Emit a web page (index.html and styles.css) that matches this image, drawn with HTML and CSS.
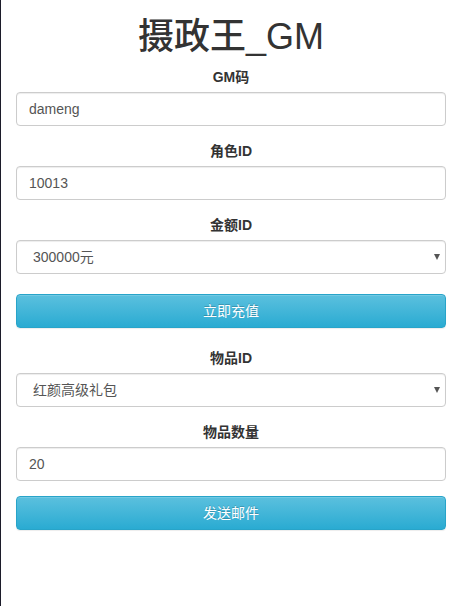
FILE: index.html
```html
<!DOCTYPE html>
<html lang="zh">
<head>
<meta charset="utf-8">
<title>摄政王_GM</title>
<link rel="stylesheet" href="styles.css">
</head>
<body>
<div class="container">
  <h1 class="title">摄政王_GM</h1>
  <div class="form-group">
    <label>GM码</label>
    <input class="form-control" type="text" value="dameng">
  </div>
  <div class="form-group">
    <label>角色ID</label>
    <input class="form-control" type="text" value="10013">
  </div>
  <div class="form-group">
    <label>金额ID</label>
    <div class="select-wrap">
      <select class="form-control select"><option>300000元</option></select>
    </div>
  </div>
  <div class="btn-row first">
    <button class="btn">立即充值</button>
  </div>
  <div class="form-group">
    <label>物品ID</label>
    <div class="select-wrap">
      <select class="form-control select"><option>红颜高级礼包</option></select>
    </div>
  </div>
  <div class="form-group">
    <label>物品数量</label>
    <input class="form-control" type="text" value="20">
  </div>
  <div class="btn-row">
    <button class="btn">发送邮件</button>
  </div>
</div>
</body>
</html>
```
FILE: styles.css
```css
html, body {
  margin: 0;
  padding: 0;
  background: #fff;
}
body {
  border-left: 1px solid #1c1c2a;
  min-height: 606px;
  box-sizing: border-box;
  font-family: "Liberation Sans", "Noto Sans CJK SC", sans-serif;
  font-size: 14px;
  line-height: 20px;
  color: #333;
}
.container {
  width: 430px;
  padding: 0 15px;
}
.title {
  margin: 17px 0 10px;
  font-size: 36px;
  line-height: 40px;
  font-weight: 500;
  text-align: center;
  color: #333;
}
.form-group {
  margin-bottom: 15px;
}
label {
  display: block;
  text-align: center;
  font-weight: bold;
  margin-bottom: 5px;
  line-height: 20px;
}
.form-control {
  display: block;
  width: 100%;
  height: 34px;
  box-sizing: border-box;
  padding: 6px 12px;
  border: 1px solid #ccc;
  border-radius: 4px;
  box-shadow: inset 0 1px 1px rgba(0,0,0,.075);
  font-family: "Liberation Sans", "Noto Sans CJK SC", sans-serif;
  font-size: 14px;
  line-height: 20px;
  color: #555;
  background: #fff;
  outline: none;
}
.select-wrap {
  position: relative;
}
.select {
  -webkit-appearance: none;
  appearance: none;
  padding-left: 16px;
}
.select-wrap::after {
  content: "";
  position: absolute;
  right: 6px;
  top: 14px;
  border-left: 3.5px solid transparent;
  border-right: 3.5px solid transparent;
  border-top: 6px solid #555;
  pointer-events: none;
}
.btn-row {
  margin: 0;
}
.btn-row.first {
  padding-top: 5px;
  margin-bottom: 20px;
}
.btn {
  display: block;
  width: 100%;
  height: 34px;
  padding: 6px 12px;
  border: 1px solid #28a4c9;
  border-radius: 4px;
  background: linear-gradient(to bottom, #5bc0de 0, #2aabd2 100%);
  box-shadow: inset 0 1px 0 rgba(255,255,255,.15), 0 1px 1px rgba(0,0,0,.075);
  color: #fff;
  text-shadow: 0 -1px 0 rgba(0,0,0,.2);
  font-family: "Liberation Sans", "Noto Sans CJK SC", sans-serif;
  font-size: 14px;
  line-height: 20px;
  text-align: center;
}
```
